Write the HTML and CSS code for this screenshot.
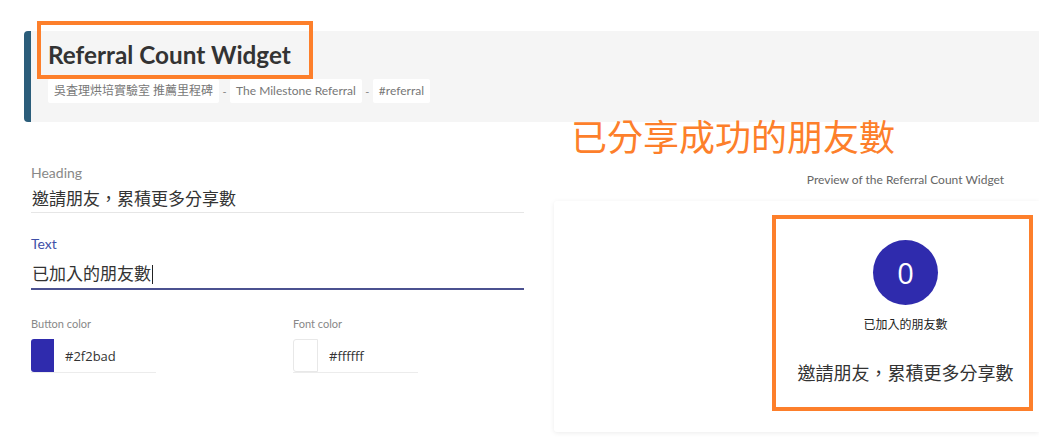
FILE: index.html
```html
<!DOCTYPE html>
<html lang="zh-Hant">
<head>
<meta charset="utf-8">
<title>Referral Count Widget</title>
<link rel="stylesheet" href="styles.css">
</head>
<body>
<div class="page">
  <header class="header">
    <h1 class="title">Referral Count Widget</h1>
    <div class="crumbs">
      <span class="chip">吳査理烘培實驗室 推薦里程碑</span>
      <span class="sep">-</span>
      <span class="chip">The Milestone Referral</span>
      <span class="sep">-</span>
      <span class="chip">#referral</span>
    </div>
    <div class="mark-title"></div>
  </header>

  <div class="note">已分享成功的朋友數</div>

  <main class="main">
    <section class="form">
      <div class="field">
        <div class="label">Heading</div>
        <div class="input">邀請朋友，累積更多分享數</div>
      </div>
      <div class="field focused">
        <div class="label">Text</div>
        <div class="input">已加入的朋友數<span class="caret"></span></div>
      </div>
      <div class="colors">
        <div class="color-field">
          <div class="small-label">Button color</div>
          <div class="color-input">
            <span class="swatch swatch-blue"></span>
            <span class="hex">#2f2bad</span>
          </div>
        </div>
        <div class="color-field">
          <div class="small-label">Font color</div>
          <div class="color-input">
            <span class="swatch swatch-white"></span>
            <span class="hex">#ffffff</span>
          </div>
        </div>
      </div>
    </section>

    <section class="preview">
      <div class="caption">Preview of the Referral Count Widget</div>
      <div class="card">
        <div class="widget">
          <div class="count">0</div>
          <div class="count-label">已加入的朋友數</div>
          <div class="widget-heading">邀請朋友，累積更多分享數</div>
        </div>
      </div>
    </section>
  </main>
</div>
</body>
</html>
```
FILE: styles.css
```css
* { box-sizing: border-box; }
html, body { margin: 0; padding: 0; background: #fff; }
body {
  font-family: Lato, "Noto Sans CJK TC", sans-serif;
  color: #333;
  width: 1039px;
  height: 438px;
  overflow: hidden;
}
.page {
  position: relative;
  padding-top: 31px;
}
.header {
  position: relative;
  margin-left: 24px;
  background: #f5f5f5;
  border-left: 7px solid #2b5d7a;
  border-radius: 4px 0 0 4px;
  height: 91px;
  padding: 9px 0 0 17px;
}
.title {
  margin: 0;
  font-size: 24.3px;
  line-height: 29px;
  font-weight: 700;
  color: #333;
}
.crumbs {
  display: flex;
  align-items: center;
  margin-top: 10px;
  height: 24px;
}
.chip {
  background: #fff;
  height: 24px;
  line-height: 24px;
  padding: 0 6px;
  font-size: 12px;
  color: #777;
  border-radius: 2px;
  font-family: Lato, "Noto Sans CJK TC", sans-serif;
}
.sep {
  width: 11px;
  text-align: center;
  font-size: 11px;
  color: #888;
}
.mark-title {
  position: absolute;
  left: 6px;
  top: -10px;
  width: 276px;
  height: 58px;
  border: 4px solid #fd7f2b;
}
.note {
  position: absolute;
  left: 571px;
  top: 117px;
  font-family: "Noto Sans CJK TC", sans-serif;
  font-size: 36px;
  line-height: 36px;
  color: #fd7f2b;
}
.main {
  display: flex;
  gap: 30px;
  margin-left: 31px;
}
.form {
  width: 493px;
  flex: none;
  padding-top: 41px;
}
.field .label {
  font-size: 14px;
  line-height: 20px;
  color: #888;
}
.field .input {
  font-family: "Noto Sans CJK TC", sans-serif;
  font-size: 17px;
  line-height: 22px;
  color: #333;
  padding: 4px 0 3px 1px;
  border-bottom: 1px solid #e6e6e6;
}
.field.focused {
  margin-top: 21px;
}
.field.focused .label { color: #3f4fa8; }
.field.focused .input {
  padding-top: 8px;
  padding-bottom: 4px;
  border-bottom: 2px solid #4b5190;
}
.caret {
  display: inline-block;
  width: 1px;
  height: 19px;
  background: #222;
  vertical-align: -4px;
  margin-left: 1px;
}
.colors {
  display: flex;
  margin-top: 27px;
}
.color-field { flex: none; width: 262px; }
.small-label {
  font-size: 11px;
  line-height: 14px;
  color: #888;
}
.color-input {
  display: flex;
  align-items: center;
  margin-top: 8px;
  width: 125px;
  height: 34px;
  border-bottom: 1px solid #ececec;
}
.swatch {
  width: 23px;
  height: 33px;
  border-radius: 3px 0 0 3px;
  flex: none;
}
.swatch-blue { background: #2f2bad; }
.swatch-white { background: #fff; border: 1px solid #e8e8e8; width: 25px; }
.hex {
  margin-left: 11px;
  font-family: "Open Sans", sans-serif;
  font-size: 13px;
  color: #333;
}
.preview {
  width: 485px;
  flex: none;
  display: flex;
  flex-direction: column;
}
.caption {
  align-self: flex-end;
  width: 267px;
  text-align: center;
  margin-top: 51px;
  font-size: 12px;
  line-height: 14px;
  color: #666;
}
.card {
  margin-top: 14px;
  height: 231px;
  background: #fff;
  box-shadow: 0 1px 5px rgba(0, 0, 0, 0.08);
  border-radius: 3px 0 0 3px;
  display: flex;
  justify-content: flex-end;
  padding: 14px 6px 0 0;
}
.widget {
  width: 261px;
  height: 196px;
  border: 4px solid #fd7f2b;
  padding: 21px 0 0 6px;
  display: flex;
  flex-direction: column;
  align-items: center;
}
.count {
  width: 65px;
  height: 65px;
  border-radius: 50%;
  background: #2f2bad;
  color: #fff;
  font-family: "Open Sans", sans-serif;
  font-size: 29px;
  line-height: 65px;
  text-align: center;
}
.count-label {
  margin-top: 10px;
  font-family: "Noto Sans CJK TC", sans-serif;
  font-size: 12px;
  line-height: 17px;
  color: #222;
}
.widget-heading {
  margin-top: 27px;
  font-family: "Noto Sans CJK TC", sans-serif;
  font-size: 18px;
  line-height: 26px;
  color: #333;
}
```
